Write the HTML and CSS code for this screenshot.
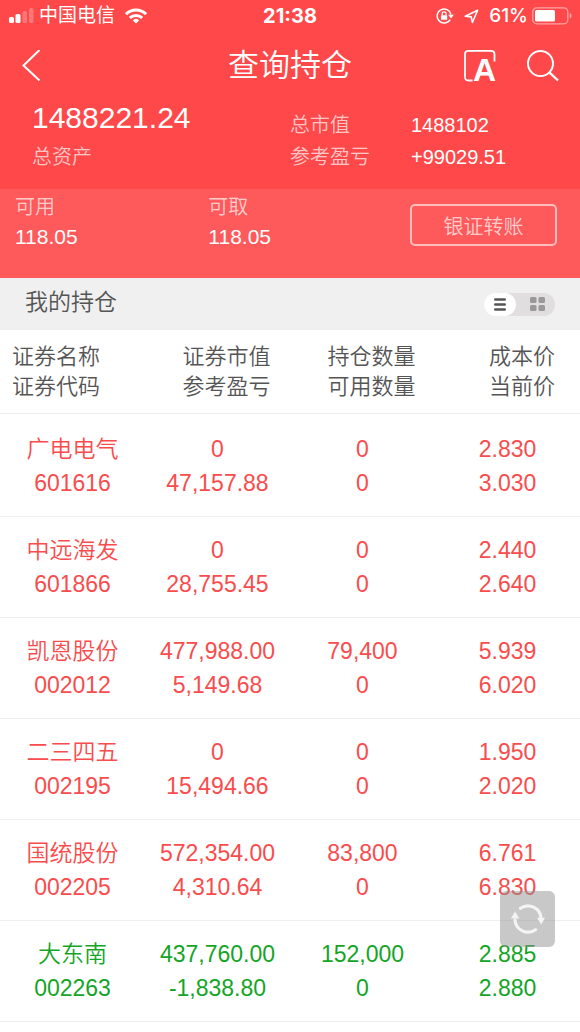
FILE: index.html
```
<!DOCTYPE html>
<html lang="zh-CN">
<head>
    <meta charset="UTF-8">
    <meta name="viewport" content="width=device-width, initial-scale=1.0">
    <title>查询持仓</title>
    <link rel="stylesheet" href="styles.css">
</head>
<body>
    <header class="header">
        <div class="status-bar">
            <div class="status-left">
                <svg width="26" height="16" viewBox="0 0 26 16" fill="#fff">
                    <rect x="1" y="9" width="5" height="6" rx="1.5"/>
                    <rect x="7.500" y="6" width="5" height="9" rx="1.5"/>
                    <rect x="14.500" y="3" width="4.500" height="12" rx="1.500" opacity=".25"/>
                    <rect x="21" y="0" width="4.500" height="15" rx="1.500" opacity=".25"/>
                </svg>
                <span class="carrier">中国电信</span>
                <svg class="wifi" width="22" height="16" viewBox="0 0 22 16" fill="none" stroke="#fff" stroke-width="3">
                    <path d="M1 6.200A14.200 14.200 0 0 1 21 6.200"/>
                    <path d="M4.800 9.900A9 9 0 0 1 17.200 9.900"/>
                    <path d="M11 15.600L7.700 12.300A4.800 4.800 0 0 1 14.300 12.300Z" fill="#fff" stroke="none"/>
                </svg>
            </div>
            <span class="time">21:38</span>
            <div class="status-right">
                <svg width="18" height="16" viewBox="0 0 18 16" fill="none" stroke="#fff" stroke-width="1.500">
                    <path d="M14.200 11.600A7 7 0 1 1 15 6.500"/>
                    <path d="M12.200 6.800H17.800L15 10.400Z" fill="#fff" stroke="none"/>
                    <rect x="5" y="7.200" width="6.200" height="4.600" rx=".6" fill="#fff" stroke="none"/>
                    <path d="M6.200 7.500V5.800A1.900 1.900 0 0 1 10 5.800V7.500" stroke-width="1.200"/>
                </svg>
                <svg class="locate" width="15" height="15" viewBox="0 0 15 15" fill="none" stroke="#fff" stroke-width="1.600" stroke-linejoin="round">
                    <path d="M13.600 1.300L1.300 7.300L7.200 7.900L8.400 13.500Z"/>
                </svg>
                <span class="battery-text">61%</span>
                <svg width="40" height="18" viewBox="0 0 40 18">
                    <rect x=".8" y=".8" width="35" height="16" rx="4" fill="none" stroke="#fff" stroke-opacity=".5" stroke-width="1.300"/>
                    <rect x="3" y="3" width="20" height="11.600" rx="1.500" fill="#fff"/>
                    <path d="M37.700 5.800Q39.600 6.800 39.600 8.800T37.700 11.800Z" fill="#fff" fill-opacity=".5"/>
                </svg>
            </div>
        </div>

        <nav class="nav">
            <button class="icon-button" aria-label="返回">
                <svg width="20" height="32" viewBox="0 0 20 32" fill="none" stroke="#fff" stroke-width="2">
                    <path d="M18.500 0L2.500 15.500L18.500 30.500"/>
                </svg>
            </button>
            <h1>查询持仓</h1>
            <div class="nav-actions">
                <button class="icon-button font-button" aria-label="字体">
                    <svg width="32" height="32" viewBox="0 0 32 32" fill="none" stroke="#fff" stroke-width="1.800">
                        <path d="M8.500 30.500H4.500Q1 30.500 1 27V4Q1 .9 4.500 .9H27Q30.500 .9 30.500 4V11.500"/>
                    </svg>
                    <span class="letter">A</span>
                </button>
                <button class="icon-button" aria-label="搜索">
                    <svg width="32" height="32" viewBox="0 0 32 32" fill="none" stroke="#fff" stroke-width="2">
                        <circle cx="13.500" cy="13.500" r="12.500"/>
                        <path d="M22.300 22.300L31 30.500" stroke-width="2.400"/>
                    </svg>
                </button>
            </div>
        </nav>

        <section class="summary">
            <div class="total">
                <div class="total-value">1488221.24</div>
                <div class="label">总资产</div>
            </div>
            <div class="details">
                <span class="label">总市值</span>
                <span>1488102</span>
                <span class="label">参考盈亏</span>
                <span>+99029.51</span>
            </div>
        </section>
    </header>

    <section class="funds">
        <div class="fund">
            <div class="label">可用</div>
            <div>118.05</div>
        </div>
        <div class="fund">
            <div class="label">可取</div>
            <div>118.05</div>
        </div>
        <button class="transfer">银证转账</button>
    </section>

    <div class="toolbar">
        <h2>我的持仓</h2>
        <div class="toggle">
            <button class="active" aria-label="列表">
                <svg width="12" height="13" viewBox="0 0 12 13" stroke="#555" stroke-width="2.600" stroke-linecap="round">
                    <path d="M1.300 1.500H10.700M1.300 6.500H10.700M1.300 11.500H10.700"/>
                </svg>
            </button>
            <button aria-label="网格">
                <svg width="15" height="14" viewBox="0 0 15 14" fill="#999">
                    <rect width="6.500" height="6" rx="1.500"/>
                    <rect x="8.500" width="6.500" height="6" rx="1.500"/>
                    <rect y="8" width="6.500" height="6" rx="1.500"/>
                    <rect x="8.500" y="8" width="6.500" height="6" rx="1.500"/>
                </svg>
            </button>
        </div>
    </div>

    <table class="holdings">
        <thead>
            <tr>
                <th>证券名称<br>证券代码</th>
                <th>证券市值<br>参考盈亏</th>
                <th>持仓数量<br>可用数量</th>
                <th>成本价<br>当前价</th>
            </tr>
        </thead>
        <tbody>
            <tr class="up">
                <td>广电电气<br>601616</td>
                <td>0<br>47,157.88</td>
                <td>0<br>0</td>
                <td>2.830<br>3.030</td>
            </tr>
            <tr class="up">
                <td>中远海发<br>601866</td>
                <td>0<br>28,755.45</td>
                <td>0<br>0</td>
                <td>2.440<br>2.640</td>
            </tr>
            <tr class="up">
                <td>凯恩股份<br>002012</td>
                <td>477,988.00<br>5,149.68</td>
                <td>79,400<br>0</td>
                <td>5.939<br>6.020</td>
            </tr>
            <tr class="up">
                <td>二三四五<br>002195</td>
                <td>0<br>15,494.66</td>
                <td>0<br>0</td>
                <td>1.950<br>2.020</td>
            </tr>
            <tr class="up">
                <td>国统股份<br>002205</td>
                <td>572,354.00<br>4,310.64</td>
                <td>83,800<br>0</td>
                <td>6.761<br>6.830</td>
            </tr>
            <tr class="down">
                <td>大东南<br>002263</td>
                <td>437,760.00<br>-1,838.80</td>
                <td>152,000<br>0</td>
                <td>2.885<br>2.880</td>
            </tr>
        </tbody>
    </table>

    <button class="refresh" aria-label="刷新">
        <svg width="34" height="32" viewBox="0 0 34 32" fill="none" stroke="#f4f4f4" stroke-width="3.200" stroke-linecap="round">
            <path d="M9.500 5.300A13 13 0 0 1 30 15"/>
            <path d="M24.500 26.700A13 13 0 0 1 4 17"/>
            <path d="M26 14.800H34L30.200 21.500Z" fill="#f4f4f4" stroke="none"/>
            <path d="M0 15.600H8.500L4 8.500Z" fill="#f4f4f4" stroke="none"/>
        </svg>
    </button>
</body>
</html>
```
FILE: styles.css
```
* {
    box-sizing: border-box;
}

body {
    margin: 0;
    background-color: #fff;
    color: #555;
    font-family: "Liberation Sans", "Noto Sans CJK SC", sans-serif;
    font-weight: 350;
}

button {
    padding: 0;
    border: none;
    background: none;
    font-family: inherit;
    font-weight: inherit;
    cursor: pointer;
}

svg {
    display: block;
}

h1,
h2 {
    margin: 0;
    font-weight: inherit;
}

.header {
    background-color: #fe4849;
    color: #fff;
}

.status-bar {
    display: grid;
    grid-template-columns: 1fr auto 1fr;
    align-items: center;
    height: 32px;
    padding: 0 8px;
    font-family: Inter, "Noto Sans CJK SC", sans-serif;
    font-size: 19px;
    font-weight: 400;
    line-height: 32px;
}

.status-left,
.status-right {
    display: flex;
    align-items: center;
}

.status-right {
    justify-content: flex-end;
}

.carrier {
    margin-left: 5px;
}

.wifi {
    margin-left: 10px;
}

.time {
    font-size: 20px;
    font-weight: 700;
}

.locate {
    margin: 0 10px;
}

.battery-text {
    margin-right: 4px;
    font-weight: 500;
}

.nav {
    display: grid;
    grid-template-columns: 1fr auto 1fr;
    align-items: center;
    height: 68px;
    padding: 0 21px;
}

.nav h1 {
    font-size: 31px;
    line-height: 44px;
}

.icon-button {
    justify-self: start;
}

.nav-actions {
    display: flex;
    justify-content: flex-end;
    gap: 31px;
}

.font-button {
    position: relative;
}

.letter {
    position: absolute;
    right: 0;
    bottom: 0;
    color: #fff;
    font-size: 32px;
    font-weight: 700;
    line-height: 24px;
}

.summary {
    display: flex;
    align-items: flex-end;
    padding-bottom: 16px;
    font-size: 20px;
    line-height: 32px;
}

.total {
    width: 50%;
    padding-left: 32px;
}

.total-value {
    margin-bottom: 5px;
    font-size: 30px;
    line-height: 36px;
}

.details {
    display: grid;
    grid-template-columns: 121px auto;
}

.label {
    color: rgba(255, 255, 255, 0.7);
    font-size: 20px;
}

.funds {
    display: flex;
    align-items: flex-start;
    padding: 3px 0 26px;
    background-color: #fe5a5b;
    color: #fff;
    font-size: 21px;
    line-height: 30px;
}

.fund {
    flex: 0 0 calc(100% / 3);
    padding-left: 15px;
}

.transfer {
    flex: none;
    width: 147px;
    height: 42px;
    margin: 12px 23px 0 auto;
    border: 2px solid rgba(255, 255, 255, 0.6);
    border-radius: 5px;
    color: rgba(255, 255, 255, 0.7);
    font-size: 20px;
}

.toolbar {
    display: flex;
    justify-content: space-between;
    align-items: center;
    height: 52px;
    padding: 0 25px;
    background-color: #f0f0f0;
}

.toolbar h2 {
    padding-bottom: 4px;
    font-size: 23px;
    line-height: 32px;
}

.toggle {
    display: flex;
    height: 23px;
    border-radius: 12px;
    background-color: #e0dede;
}

.toggle button {
    display: flex;
    justify-content: center;
    align-items: center;
    width: 39px;
    padding-left: 4px;
    border-radius: 12px;
}

.toggle .active {
    width: 32px;
    padding: 0;
    background-color: #fff;
}

.holdings {
    width: 100%;
    table-layout: fixed;
    border-collapse: collapse;
    text-align: center;
}

.holdings tr {
    border-bottom: 1px solid #eee;
}

.holdings th {
    padding: 12px 0 11px 18px;
    font-size: 22px;
    font-weight: inherit;
    line-height: 30px;
}

.holdings th:first-child {
    padding-left: 12px;
    text-align: left;
}

.holdings th:last-child {
    padding-right: 25px;
    text-align: right;
}

.holdings td {
    padding: 16px 0;
    font-size: 23px;
    line-height: 34px;
}

.holdings tbody tr:first-child td {
    padding-top: 18px;
}

.up {
    color: #f84c4d;
}

.down {
    color: #14a526;
}

.refresh {
    position: fixed;
    right: 25px;
    bottom: 85px;
    display: flex;
    justify-content: center;
    align-items: center;
    width: 55px;
    height: 56px;
    border-radius: 6px;
    background-color: rgba(145, 145, 145, 0.5);
}
```
